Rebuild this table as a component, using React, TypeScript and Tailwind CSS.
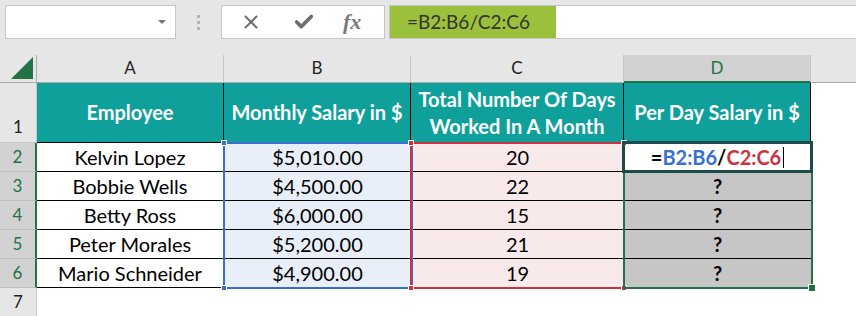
import React from 'react';
import { X, Check } from 'lucide-react';

const rows = [
  { name: 'Kelvin Lopez', salary: '$5,010.00', days: '20' },
  { name: 'Bobbie Wells', salary: '$4,500.00', days: '22' },
  { name: 'Betty Ross', salary: '$6,000.00', days: '15' },
  { name: 'Peter Morales', salary: '$5,200.00', days: '21' },
  { name: 'Mario Schneider', salary: '$4,900.00', days: '19' },
];

const font = { fontFamily: 'Lato, "Open Sans", sans-serif' };

const FormulaBar: React.FC = () => (
  <div className="h-[55px] bg-[#e6e6e6] flex items-start pt-[5px]">
    {/* Name box */}
    <div className="ml-[5px] w-[171px] h-[34px] bg-white border border-[#c6c6c6] flex items-center justify-end pr-[9px]">
      <div className="w-0 h-0 border-l-[4px] border-r-[4px] border-t-[4px] border-l-transparent border-r-transparent border-t-[#777]" />
    </div>
    <div className="w-[45px] h-[34px] flex flex-col items-center justify-center gap-[3px]">
      <div className="w-[3px] h-[3px] bg-[#b4b4b4]" />
      <div className="w-[3px] h-[3px] bg-[#b4b4b4]" />
      <div className="w-[3px] h-[3px] bg-[#b4b4b4]" />
    </div>
    {/* Cancel / enter / function */}
    <div className="w-[164px] h-[34px] bg-white border border-[#c6c6c6] flex items-center text-[#6f6f6f]">
      <X className="ml-[18px] w-[22px] h-[22px]" strokeWidth={2.2} />
      <Check className="ml-[31px] w-[22px] h-[22px]" strokeWidth={4} />
      <span className="ml-[28px] text-[22px] italic font-bold leading-none text-[#7a7a7a]" style={{ fontFamily: '"Liberation Serif", serif' }}>
        fx
      </span>
    </div>
    {/* Formula input */}
    <div className="ml-[4px] flex-1 h-[34px] bg-white border border-[#c6c6c6] border-r-0 flex">
      <div className="w-[166px] h-full bg-[#9bc13c] flex items-center pl-[17px] text-[19px] text-[#333]" style={font}>
        =B2:B6/C2:C6
      </div>
    </div>
  </div>
);

const Sheet: React.FC = () => {
  const colHead = 'bg-[#e6e6e6] border-r border-b border-[#c6c6c6] border-b-[#ababab] flex items-end justify-center pb-[2px] text-[17px] text-[#222]';
  const rowHeadSel = 'bg-[#d2d2d2] border-b border-[#bdbdbd] border-r-2 border-r-[#217346] flex items-center justify-center text-[17px] text-[#217346]';
  const header = 'bg-[#0fa09c] border-r border-b border-black flex items-center justify-center text-center text-white font-bold text-[20px] leading-[27px]';
  const cell = 'border-b border-black flex items-center justify-center text-[20px] text-black';

  return (
    <div className="relative grid grid-cols-[37px_187px_187px_213px_187px_1fr] grid-rows-[28px_60px_29px_29px_29px_29px_29px_28px] bg-white" style={font}>
      {/* corner */}
      <div className="bg-[#e6e6e6] border-r border-b border-[#ababab] flex items-end justify-end pr-[3px] pb-[3px]">
        <svg width="22" height="22" viewBox="0 0 22 22">
          <polygon points="22,0 22,22 0,22" fill="#217346" />
        </svg>
      </div>
      <div className={colHead}>A</div>
      <div className={colHead}>B</div>
      <div className={colHead}>C</div>
      <div className="bg-[#d2d2d2] border-r border-[#c6c6c6] border-b-2 border-b-[#217346] flex items-end justify-center pb-[1px] text-[17px] text-[#217346]">D</div>
      <div className="bg-[#e6e6e6] border-b border-[#ababab]" />

      {/* header row */}
      <div className="bg-[#e6e6e6] border-r border-b border-[#c6c6c6] flex items-end justify-center pb-[3px] text-[17px] text-[#222]">1</div>
      <div className={header}>Employee</div>
      <div className={header}>Monthly Salary in $</div>
      <div className={header}>Total Number Of Days<br />Worked In A Month</div>
      <div className={header}>Per Day Salary in $</div>
      <div />

      {rows.map((r, i) => (
        <React.Fragment key={r.name}>
          <div className={rowHeadSel}>{i + 2}</div>
          <div className={`${cell} border-r`}>{r.name}</div>
          <div className={`${cell} bg-[#e9eff9]`}>{r.salary}</div>
          <div className={`${cell} bg-[#f8eaeb]`}>{r.days}</div>
          {i === 0 ? (
            <div className={`${cell} bg-white font-bold`}>
              <span>=</span>
              <span className="text-[#3a6fd0]">B2:B6</span>
              <span>/</span>
              <span className="text-[#c9343e]">C2:C6</span>
              <span className="ml-[2px] w-px h-[21px] bg-black" />
            </div>
          ) : (
            <div className={`${cell} bg-[#c6c6c6] font-bold`}>?</div>
          )}
          <div />
        </React.Fragment>
      ))}

      <div className="bg-[#e6e6e6] border-r border-[#c6c6c6] flex items-center justify-center text-[17px] text-[#222]">7</div>
      <div />
      <div />
      <div />
      <div />
      <div />

      {/* range highlight: B2:B6 */}
      <div className="absolute left-[223px] top-[87px] w-[190px] h-[147px] border-2 border-[#3a6fd0] pointer-events-none" />
      <div className="absolute left-[221px] top-[85px] w-[6px] h-[6px] bg-[#3a6fd0] border border-white" />
      <div className="absolute left-[221px] top-[230px] w-[6px] h-[6px] bg-[#3a6fd0] border border-white" />
      {/* range highlight: C2:C6 */}
      <div className="absolute left-[410px] top-[87px] w-[215px] h-[147px] border-2 border-[#c9343e] pointer-events-none" />
      <div className="absolute left-[408px] top-[85px] w-[6px] h-[6px] bg-[#c9343e] border border-white" />
      <div className="absolute left-[408px] top-[230px] w-[6px] h-[6px] bg-[#c9343e] border border-white" />
      <div className="absolute left-[621px] top-[85px] w-[6px] h-[6px] bg-[#c9343e] border border-white" />
      <div className="absolute left-[621px] top-[230px] w-[6px] h-[6px] bg-[#c9343e] border border-white" />
      {/* selection D2:D6 */}
      <div className="absolute left-[623px] top-[87px] w-[190px] h-[147px] border-2 border-[#217346] pointer-events-none" />
      <div className="absolute left-[808px] top-[229px] w-[8px] h-[8px] bg-[#217346] border border-white" />
      {/* active cell D2 */}
      <div className="absolute left-[622px] top-[86px] w-[191px] h-[32px] border-[3px] border-[#1b4b4a] pointer-events-none" />
    </div>
  );
};

const App: React.FC = () => (
  <div className="w-[856px] h-[316px] overflow-hidden bg-white">
    <FormulaBar />
    <Sheet />
  </div>
);

export default App;
